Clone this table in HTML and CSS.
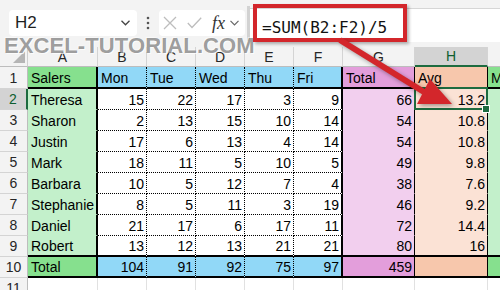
FILE: index.html
```html
<!DOCTYPE html>
<html>
<head>
<meta charset="utf-8">
<link rel="stylesheet" href="styles.css">
</head>
<body>
<div class="app">
  <div class="toolbar">
    <div class="namebox"><span>H2</span>
      <svg class="chev" width="9" height="6" viewBox="0 0 9 6"><polyline points="0.5,0.8 4.5,4.8 8.5,0.8" fill="none" stroke="#444" stroke-width="1.3"/></svg>
    </div>
    <div class="dots">
      <svg width="4" height="14" viewBox="0 0 4 14"><circle cx="2" cy="2" r="1.3" fill="#555"/><circle cx="2" cy="7" r="1.3" fill="#555"/><circle cx="2" cy="12" r="1.3" fill="#555"/></svg>
    </div>
    <div class="fxbox">
      <svg class="ic-x" width="14" height="14" viewBox="0 0 14 14"><path d="M1 1 L13 13 M13 1 L1 13" stroke="#bdbdbd" stroke-width="1.3" fill="none"/></svg>
      <svg class="ic-ok" width="15" height="12" viewBox="0 0 15 12"><polyline points="0.8,6 5,10.5 14.2,0.8" stroke="#bdbdbd" stroke-width="1.3" fill="none"/></svg>
      <span class="fx">fx</span>
      <svg class="chev2" width="9" height="6" viewBox="0 0 9 6"><polyline points="0.5,0.8 4.5,4.8 8.5,0.8" fill="none" stroke="#666" stroke-width="1.2"/></svg>
    </div>
    <div class="grip"></div>
    <div class="formula">=SUM(B2:F2)/5</div>
  </div>

  <div class="sheet">
    <!-- column headers -->
    <div class="c corner"><svg width="14" height="14" viewBox="0 0 14 14"><polygon points="13,1 13,13 1,13" fill="#b5b5b5"/></svg></div>
    <div class="c ch">A</div><div class="c ch">B</div><div class="c ch">C</div><div class="c ch">D</div><div class="c ch">E</div><div class="c ch">F</div><div class="c ch">G</div><div class="c ch ch-sel">H</div><div class="c ch">I</div>

    <!-- row 1 -->
    <div class="c rh">1</div>
    <div class="c gd tr tb">Salers</div>
    <div class="c bl dr tb">Mon</div><div class="c bl dr tb">Tue</div><div class="c bl dr tb">Wed</div><div class="c bl dr tb">Thu</div><div class="c bl tr tb">Fri</div>
    <div class="c pd sr tb">Total</div>
    <div class="c od sr tb">Avg</div>
    <div class="c gd tb">Max</div>

    <!-- row 2 -->
    <div class="c rh rh-sel">2</div>
    <div class="c gl tr nb">Theresa</div>
    <div class="c n dr db">15</div><div class="c n dr db">22</div><div class="c n dr db">17</div><div class="c n dr db">3</div><div class="c n tr db">9</div>
    <div class="c n pl sr nb">66</div>
    <div class="c n ol sr nb sel">13.2</div>
    <div class="c gl nb"></div>

    <!-- row 3 -->
    <div class="c rh">3</div>
    <div class="c gl tr nb">Sharon</div>
    <div class="c n dr db">2</div><div class="c n dr db">13</div><div class="c n dr db">15</div><div class="c n dr db">10</div><div class="c n tr db">14</div>
    <div class="c n pl sr nb">54</div>
    <div class="c n ol sr nb">10.8</div>
    <div class="c gl nb"></div>

    <!-- row 4 -->
    <div class="c rh">4</div>
    <div class="c gl tr nb">Justin</div>
    <div class="c n dr db">17</div><div class="c n dr db">6</div><div class="c n dr db">13</div><div class="c n dr db">4</div><div class="c n tr db">14</div>
    <div class="c n pl sr nb">54</div>
    <div class="c n ol sr nb">10.8</div>
    <div class="c gl nb"></div>

    <!-- row 5 -->
    <div class="c rh">5</div>
    <div class="c gl tr nb">Mark</div>
    <div class="c n dr db">18</div><div class="c n dr db">11</div><div class="c n dr db">5</div><div class="c n dr db">10</div><div class="c n tr db">5</div>
    <div class="c n pl sr nb">49</div>
    <div class="c n ol sr nb">9.8</div>
    <div class="c gl nb"></div>

    <!-- row 6 -->
    <div class="c rh">6</div>
    <div class="c gl tr nb">Barbara</div>
    <div class="c n dr db">10</div><div class="c n dr db">5</div><div class="c n dr db">12</div><div class="c n dr db">7</div><div class="c n tr db">4</div>
    <div class="c n pl sr nb">38</div>
    <div class="c n ol sr nb">7.6</div>
    <div class="c gl nb"></div>

    <!-- row 7 -->
    <div class="c rh">7</div>
    <div class="c gl tr nb">Stephanie</div>
    <div class="c n dr db">8</div><div class="c n dr db">5</div><div class="c n dr db">11</div><div class="c n dr db">3</div><div class="c n tr db">19</div>
    <div class="c n pl sr nb">46</div>
    <div class="c n ol sr nb">9.2</div>
    <div class="c gl nb"></div>

    <!-- row 8 -->
    <div class="c rh">8</div>
    <div class="c gl tr nb">Daniel</div>
    <div class="c n dr db">21</div><div class="c n dr db">17</div><div class="c n dr db">6</div><div class="c n dr db">17</div><div class="c n tr db">11</div>
    <div class="c n pl sr nb">72</div>
    <div class="c n ol sr nb">14.4</div>
    <div class="c gl nb"></div>

    <!-- row 9 -->
    <div class="c rh">9</div>
    <div class="c gl tr tb">Robert</div>
    <div class="c n dr tb">13</div><div class="c n dr tb">12</div><div class="c n dr tb">13</div><div class="c n dr tb">21</div><div class="c n tr tb">21</div>
    <div class="c n pl sr tb">80</div>
    <div class="c n ol sr tb">16</div>
    <div class="c gl tb"></div>

    <!-- row 10 -->
    <div class="c rh">10</div>
    <div class="c gd tr tb">Total</div>
    <div class="c n bl dr tb">104</div><div class="c n bl dr tb">91</div><div class="c n bl dr tb">92</div><div class="c n bl dr tb">75</div><div class="c n bl tr tb">97</div>
    <div class="c n pd sr tb">459</div>
    <div class="c n od sr tb"></div>
    <div class="c gd tb"></div>

    <!-- row 11 -->
    <div class="c rh">11</div>
    <div class="c"></div><div class="c"></div><div class="c"></div><div class="c"></div><div class="c"></div><div class="c"></div><div class="c"></div><div class="c"></div><div class="c"></div>
  </div>

  <div class="watermark">EXCEL-TUTORIAL.COM</div>
  <div class="redbox"></div>
  <svg class="arrow" width="500" height="290" viewBox="0 0 500 290">
    <line x1="340" y1="40" x2="424" y2="92" stroke="#d3262b" stroke-width="6"/>
    <polygon points="452,104 417,104 430,79" fill="#d3262b"/>
  </svg>
</div>
</body>
</html>
```

FILE: styles.css
```css
* { box-sizing: border-box; }
html, body { margin: 0; padding: 0; }
body {
  width: 500px;
  height: 290px;
  overflow: hidden;
  background: #f3f3f3;
  font-family: "Liberation Sans", Arial, sans-serif;
}
.app {
  position: relative;
  width: 500px;
  height: 290px;
  overflow: hidden;
}

/* ---------- toolbar ---------- */
.toolbar {
  height: 47px;
  display: flex;
  align-items: flex-start;
}
.namebox {
  margin: 10px 0 0 9px;
  width: 128px;
  height: 26px;
  background: #fff;
  border-radius: 4px;
  display: flex;
  align-items: center;
  justify-content: space-between;
  padding: 0 7px 0 6px;
  font-size: 17px;
  color: #1f1f1f;
}
.dots {
  margin-top: 10px;
  width: 22px;
  height: 26px;
  display: flex;
  align-items: center;
  justify-content: center;
}
.fxbox {
  margin-top: 10px;
  width: 86px;
  height: 26px;
  background: #fff;
  border-radius: 4px;
  display: flex;
  align-items: center;
}
.ic-x { margin-left: 4px; }
.ic-ok { margin-left: 10px; }
.fx {
  margin-left: 10px;
  font-family: "Liberation Serif", serif;
  font-style: italic;
  font-size: 18px;
  color: #333;
}
.chev2 { margin-left: 5px; }
.grip {
  margin: 6px 0 0 2px;
  width: 3px;
  height: 35px;
  background: #d2d2d2;
}
.formula {
  margin-top: 8px;
  flex: 1;
  height: 34px;
  background: #fff;
  border-top: 1px solid #d6d6d6;
  padding: 3px 0 0 12px;
  display: flex;
  align-items: center;
  font-family: "DejaVu Sans Mono", monospace;
  font-size: 16px;
  color: #111;
  white-space: nowrap;
}

/* ---------- sheet ---------- */
.sheet {
  display: grid;
  grid-template-columns: 28px 70px 49px 49px 49px 49px 49px 72px 73px 60px;
  grid-template-rows: 20px 22px repeat(9, 21px) 20px;
  width: 560px;
  background: #fff;
}
.c {
  border-right: 1px solid #e1e1e1;
  border-bottom: 1px solid #e1e1e1;
  display: flex;
  align-items: flex-end;
  padding: 0 2px 1px 3px;
  font-size: 14px;
  line-height: 16px;
  color: #000;
  white-space: nowrap;
  overflow: hidden;
}
.n { justify-content: flex-end; }

.corner {
  background: #f3f3f3;
  border-right-color: #cfcfcf;
  border-bottom-color: #bdbdbd;
  align-items: flex-end;
  justify-content: flex-end;
  padding: 0 1px 2px 0;
}
.ch {
  background: #f3f3f3;
  border-right-color: #d4d4d4;
  border-bottom-color: #bdbdbd;
  justify-content: center;
  align-items: center;
  padding: 0;
  color: #262626;
}
.ch-sel {
  background: #d3d3d3;
  border-bottom: 2px solid #1d6b3f;
  color: #0e5e30;
}
.rh {
  background: #f3f3f3;
  border-right-color: #bdbdbd;
  border-bottom-color: #d4d4d4;
  justify-content: center;
  align-items: center;
  padding: 0;
  color: #262626;
}
.rh-sel {
  background: #d3d3d3;
  border-right: 2px solid #1d6b3f;
  color: #0e5e30;
}

/* fills */
.gd { background: #86e08e; }
.gl { background: #c3f0cb; }
.bl { background: #91d8f7; }
.pd { background: #e39edb; }
.pl { background: #f2cfee; }
.od { background: #f7c7ac; }
.ol { background: #fbe2d5; }

/* borders */
.tr { border-right: 2px solid #000; }
.sr { border-right: 1px solid #000; }
.dr { border-right: 1px dotted #000; }
.tb { border-bottom: 2px solid #000; }
.db { border-bottom: 1px dotted #000; }
.nb { border-bottom-color: transparent; }

/* selected cell */
.sel {
  position: relative;
  overflow: visible;
  z-index: 2;
}
.sel::after {
  content: "";
  position: absolute;
  left: -1px;
  top: -2px;
  right: -1px;
  bottom: -1px;
  border: 2px solid #1d6b3f;
}
.sel::before {
  content: "";
  position: absolute;
  right: -3px;
  bottom: -4px;
  width: 6px;
  height: 6px;
  background: #1d6b3f;
  border: 1px solid #fff;
  z-index: 3;
}

/* ---------- annotations ---------- */
.watermark {
  position: absolute;
  left: 4px;
  top: 35px;
  font-size: 22px;
  line-height: 22px;
  font-weight: bold;
  letter-spacing: 0.1px;
  color: rgba(95, 95, 95, 0.62);
  text-shadow: 1px 1px 0 rgba(255, 255, 255, 0.75), -1px -1px 0 rgba(255, 255, 255, 0.5);
  white-space: nowrap;
  z-index: 4;
}
.redbox {
  position: absolute;
  left: 253px;
  top: 4px;
  width: 154px;
  height: 38px;
  border: 4px solid #d3262b;
  box-shadow: 2px 2px 3px rgba(0, 0, 0, 0.3);
  z-index: 5;
}
.arrow {
  position: absolute;
  left: 0;
  top: 0;
  z-index: 6;
  filter: drop-shadow(2px 2px 2px rgba(0, 0, 0, 0.35));
}
```
